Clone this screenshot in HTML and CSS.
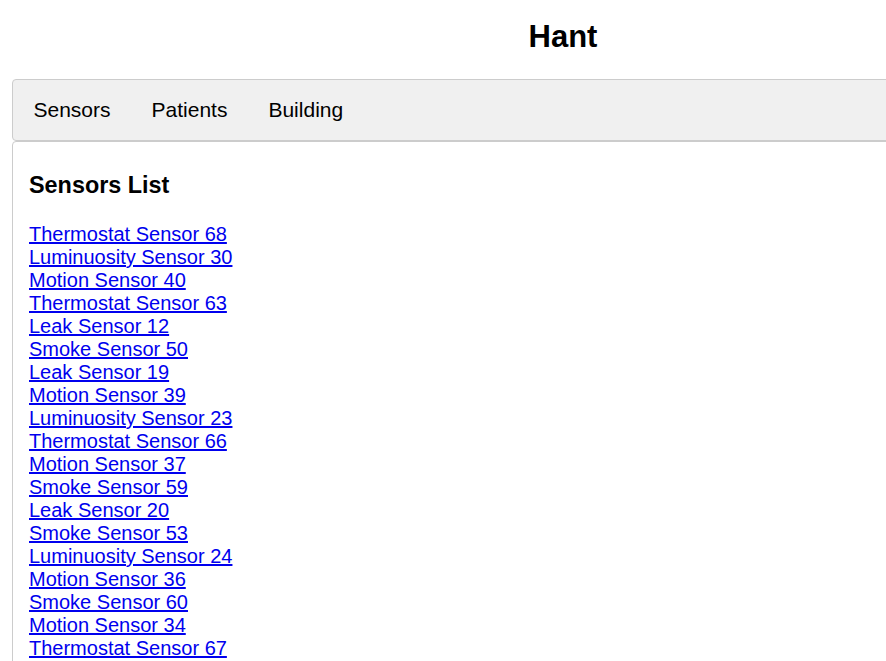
FILE: index.html
```html
<!DOCTYPE html>
<html>
<head>
<meta charset="utf-8">
<title>Hant</title>
<link rel="stylesheet" href="styles.css">
</head>
<body>
<div class="page">
  <h1 class="title">Hant</h1>
  <nav class="nav">
    <a class="nav-item" href="#">Sensors</a>
    <a class="nav-item" href="#">Patients</a>
    <a class="nav-item" href="#">Building</a>
  </nav>
  <main class="content">
    <h3 class="list-title">Sensors List</h3>
    <div class="sensor-list">
      <a href="#">Thermostat Sensor 68</a>
      <a href="#">Luminuosity Sensor 30</a>
      <a href="#">Motion Sensor 40</a>
      <a href="#">Thermostat Sensor 63</a>
      <a href="#">Leak Sensor 12</a>
      <a href="#">Smoke Sensor 50</a>
      <a href="#">Leak Sensor 19</a>
      <a href="#">Motion Sensor 39</a>
      <a href="#">Luminuosity Sensor 23</a>
      <a href="#">Thermostat Sensor 66</a>
      <a href="#">Motion Sensor 37</a>
      <a href="#">Smoke Sensor 59</a>
      <a href="#">Leak Sensor 20</a>
      <a href="#">Smoke Sensor 53</a>
      <a href="#">Luminuosity Sensor 24</a>
      <a href="#">Motion Sensor 36</a>
      <a href="#">Smoke Sensor 60</a>
      <a href="#">Motion Sensor 34</a>
      <a href="#">Thermostat Sensor 67</a>
    </div>
  </main>
</div>
</body>
</html>
```

FILE: styles.css
```css
html, body {
  margin: 0;
  padding: 0;
  overflow: hidden;
  background: #ffffff;
}
body {
  font-family: "Liberation Sans", Arial, sans-serif;
  font-size: 20px;
  color: #000;
}
.page {
  width: 1102px;
  padding: 0 12px;
}
.title {
  margin: 19px 0 24px;
  font-size: 31px;
  line-height: 36px;
  font-weight: bold;
  text-align: center;
}
.nav {
  display: flex;
  height: 60px;
  align-items: center;
  background: #f0f0f0;
  border: 1px solid #cccccc;
  border-radius: 4px;
}
.nav-item {
  padding: 0 20.5px;
  font-size: 21px;
  color: #000;
  text-decoration: none;
}
.content {
  border: 1px solid #cccccc;
  border-radius: 4px;
  padding: 7px 16px 16px;
  min-height: 600px;
}
.list-title {
  margin: 23px 0 24px;
  font-size: 23.4px;
  font-weight: bold;
}
.sensor-list {
  display: flex;
  flex-direction: column;
  align-items: flex-start;
  line-height: 23px;
}
.sensor-list a {
  color: #0000ee;
  text-decoration: underline;
}
```
